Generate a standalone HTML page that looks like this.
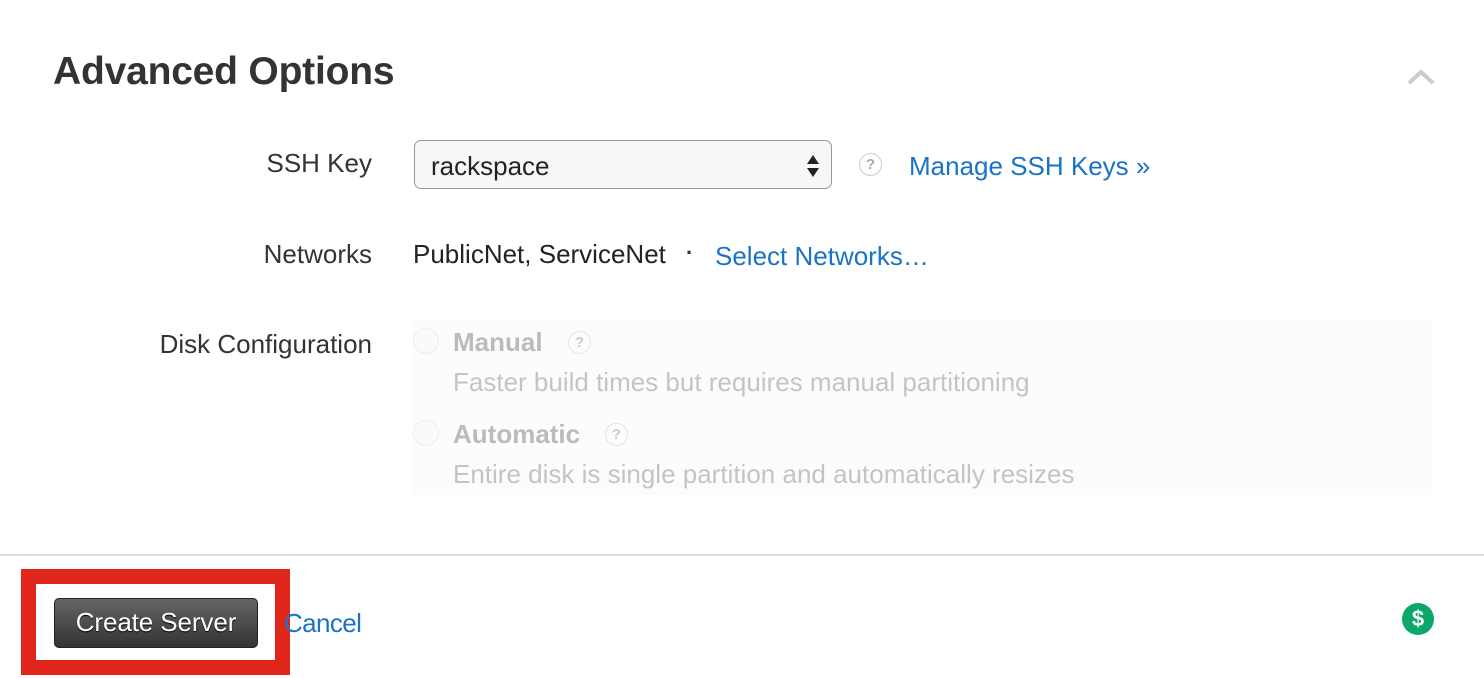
<!DOCTYPE html>
<html><head><style>
body{margin:0;width:1484px;height:678px;background:#fff;font-family:"Liberation Sans",sans-serif;position:relative;overflow:hidden}
.a{position:absolute;white-space:nowrap}
h1{position:absolute;left:53px;top:50px;margin:0;font-size:39px;font-weight:bold;color:#333;letter-spacing:-0.2px}
.lbl{font-size:26px;color:#333;text-align:right;right:1112px}
.link{color:#1a73c8;font-size:26px}
.q{position:absolute;width:21px;height:21px;border:1.5px solid #ccc;border-radius:50%;color:#aaa;font-size:15px;font-weight:bold;text-align:center;line-height:21px}
.dis{color:#bbb;font-size:26px}
.radio{position:absolute;width:24px;height:24px;border-radius:50%;border:1px solid #eee;background:#fafafa}
</style></head><body>
<h1>Advanced Options</h1>
<svg class="a" style="left:1406px;top:66px" width="30" height="20"><polyline points="3,17 15,6 27,17" fill="none" stroke="#ccc" stroke-width="4"/></svg>

<div class="a lbl" style="top:148px">SSH Key</div>
<div class="a" style="left:414px;top:140px;width:416px;height:47px;border:1.5px solid #999;border-radius:7px;background:#f7f7f7"></div>
<div class="a" style="left:431px;top:151px;font-size:26px;color:#222">rackspace</div>
<svg class="a" style="left:806px;top:154px" width="14" height="24"><polygon points="7,1 13,10 1,10" fill="#222"/><polygon points="1,14 13,14 7,23" fill="#222"/></svg>
<div class="q" style="left:859px;top:153px">?</div>
<div class="a link" style="left:909px;top:151px">Manage SSH Keys »</div>

<div class="a lbl" style="top:239px">Networks</div>
<div class="a" style="left:413px;top:239px;font-size:26px;color:#222">PublicNet, ServiceNet</div>
<div class="a" style="left:686px;top:240px;font-size:22px;color:#333;font-weight:bold">·</div>
<div class="a link" style="left:715px;top:241px">Select Networks…</div>

<div class="a lbl" style="top:329px">Disk Configuration</div>
<div class="a" style="left:412px;top:319px;width:1020px;height:176px;background:#fcfcfc"></div>
<div class="radio" style="left:413px;top:328px"></div>
<div class="a dis" style="left:453px;top:327px;font-weight:bold">Manual</div>
<div class="q" style="left:568px;top:331px;color:#ccc;border-color:#e4e4e4">?</div>
<div class="a dis" style="left:453px;top:367px;color:#c4c4c4">Faster build times but requires manual partitioning</div>
<div class="radio" style="left:413px;top:420px"></div>
<div class="a dis" style="left:453px;top:419px;font-weight:bold">Automatic</div>
<div class="q" style="left:605px;top:423px;color:#ccc;border-color:#e4e4e4">?</div>
<div class="a dis" style="left:453px;top:459px;color:#c4c4c4">Entire disk is single partition and automatically resizes</div>

<div class="a" style="left:0;top:554px;width:1484px;height:2px;background:#ddd"></div>

<div class="a" style="left:21px;top:569px;width:239px;height:76px;border:15px solid #e0261b"></div>
<div class="a" style="left:54px;top:598px;width:202px;height:48px;border:1px solid #222;border-radius:5px;background:linear-gradient(#666,#333);color:#fff;font-size:26px;letter-spacing:-0.1px;text-align:center;line-height:46px;text-shadow:0 1px 1px #000">Create Server</div>
<div class="a link" style="left:284px;top:608px;letter-spacing:-0.6px">Cancel</div>

<div class="a" style="left:1402px;top:603px;width:32px;height:32px;border-radius:50%;background:#0aa86b;color:#fff;font-weight:bold;font-size:22px;text-align:center;line-height:32px">$</div>
</body></html>
